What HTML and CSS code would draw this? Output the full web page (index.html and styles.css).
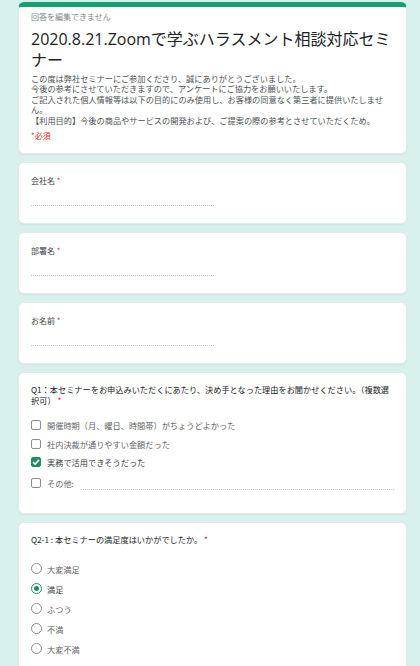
FILE: index.html
```html
<!DOCTYPE html>
<html lang="ja">
<head>
    <meta charset="UTF-8">
    <title>2020.8.21.Zoomで学ぶハラスメント相談対応セミナー</title>
    <link rel="stylesheet" href="styles.css">
</head>
<body>

<div id="form">
    <div class="card head">
        <p class="meta">回答を編集できません</p>
        <h1 class="title">2020.8.21.Zoomで学ぶハラスメント相談対応セミナー</h1>
        <p class="desc">この度は弊社セミナーにご参加くださり、誠にありがとうございました。<br>今後の参考にさせていただきますので、アンケートにご協力をお願いいたします。<br>ご記入された個人情報等は以下の目的にのみ使用し、お客様の同意なく第三者に提供いたしません。<br>【利用目的】今後の商品やサービスの開発および、ご提案の際の参考とさせていただくため。</p>
        <p class="required">*必須</p>
    </div>

    <div class="card field">
        <div class="label">会社名 <span class="star">*</span></div>
        <div class="input"></div>
    </div>
    <div class="card field">
        <div class="label">部署名 <span class="star">*</span></div>
        <div class="input"></div>
    </div>
    <div class="card field">
        <div class="label">お名前 <span class="star">*</span></div>
        <div class="input"></div>
    </div>

    <div class="card question">
        <div class="qtext">Q1：本セミナーをお申込みいただくにあたり、決め手となった理由をお聞かせください。（複数選択可） <span class="star">*</span></div>
        <ul class="options">
            <li><span class="box"></span>開催時期（月、曜日、時間帯）がちょうどよかった</li>
            <li><span class="box"></span>社内決裁が通りやすい金額だった</li>
            <li class="on"><span class="box"><svg viewBox="0 0 10 10" width="10" height="10"><path d="M2 5.2 L4.1 7.2 L8 2.9" fill="none" stroke="#fff" stroke-width="1.6"/></svg></span>実務で活用できそうだった</li>
            <li class="other"><span class="box"></span>その他:<span class="line"></span></li>
        </ul>
    </div>

    <div class="card question">
        <div class="qtext">Q2-1 : 本セミナーの満足度はいかがでしたか。 <span class="star">*</span></div>
        <ul class="options radios">
            <li><span class="radio"></span>大変満足</li>
            <li class="on"><span class="radio"></span>満足</li>
            <li><span class="radio"></span>ふつう</li>
            <li><span class="radio"></span>不満</li>
            <li><span class="radio"></span>大変不満</li>
        </ul>
    </div>
</div>

</body>
</html>
```

FILE: styles.css
```css
*{
    margin: 0;
    padding: 0;
}
ul, ol{
    list-style: none;
}

body{
    background: #d9f1ed;
    font-family: "Noto Sans CJK JP", "Liberation Sans", sans-serif;
    color: #202124;
}
#form{
    display: flex;
    flex-direction: column;
    gap: 8px;
    padding: 2px 13px 0 18px;
}
.card{
    background: #fff;
    border: 1px solid #e2ebe8;
    border-radius: 6px;
    box-shadow: 0 1px 2px rgba(0, 0, 0, .06);
    padding: 11px 12px 17px 12px;
}

/* header card */
.head{
    border-top: 5px solid #16a072;
    padding: 4px 12px 11px 12px;
}
.meta{
    font-size: 8px;
    line-height: 12px;
    color: #80868b;
}
.title{
    font-family: "Open Sans", "Noto Sans CJK JP", sans-serif;
    font-weight: normal;
    font-size: 16px;
    line-height: 21px;
    margin-top: 6px;
    color: #202124;
}
.desc{
    width: 357px;
    font-size: 8.2px;
    line-height: 10.4px;
    margin-top: 2px;
    color: #4d5156;
}
.required{
    font-size: 8px;
    line-height: 12px;
    margin-top: 5px;
    color: #d93025;
}
.star{
    color: #d93025;
}

/* text fields */
.label{
    font-size: 8px;
    line-height: 14px;
    color: #3c4043;
}
.input{
    width: 183px;
    height: 17px;
    border-bottom: 1px dotted #c8c8c8;
}

/* questions */
.question{
    padding-bottom: 19px;
}
.qtext{
    font-size: 8.2px;
    line-height: 11px;
    color: #202124;
}
.options{
    margin-top: 10px;
    display: flex;
    flex-direction: column;
}
.options li{
    display: flex;
    align-items: center;
    height: 18.5px;
    font-size: 8.2px;
    color: #5f6368;
}
.options li.on{
    color: #3c4043;
}
.options .other{
    height: 22px;
}
.box{
    width: 10px;
    height: 10px;
    box-sizing: border-box;
    border: 1.4px solid #8a8f94;
    border-radius: 2px;
    margin-right: 6px;
    display: flex;
}
.on .box{
    background: #1e8e5a;
    border-color: #1e8e5a;
}
.on .box svg{
    margin: -1.4px;
}
.line{
    flex: 1;
    align-self: flex-end;
    margin: 0 0 4px 7px;
    border-bottom: 1px dotted #c8c8c8;
}

.radios{
    margin-top: 14px;
}
.radios li{
    height: 20px;
}
.radio{
    width: 11px;
    height: 11px;
    box-sizing: border-box;
    border: 1.4px solid #8a8f94;
    border-radius: 50%;
    margin-right: 5px;
    display: flex;
    align-items: center;
    justify-content: center;
}
.on .radio{
    border-color: #1e8e5a;
}
.on .radio:after{
    content: "";
    width: 5px;
    height: 5px;
    border-radius: 50%;
    background: #1e8e5a;
}
```
